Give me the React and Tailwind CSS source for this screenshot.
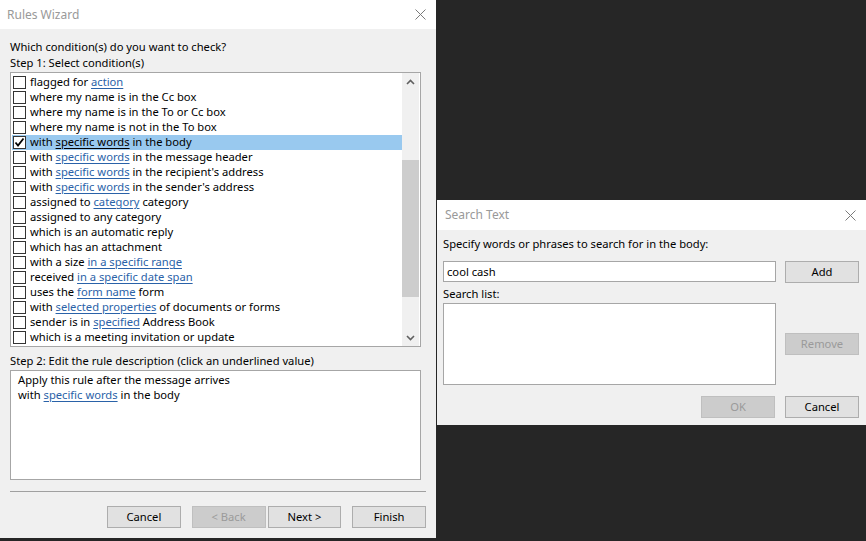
import { Fragment } from 'react'

const conditions = [
  ['flagged for ', ['action']],
  ['where my name is in the Cc box'],
  ['where my name is in the To or Cc box'],
  ['where my name is not in the To box'],
  ['with ', ['specific words'], ' in the body'],
  ['with ', ['specific words'], ' in the message header'],
  ['with ', ['specific words'], ' in the recipient\'s address'],
  ['with ', ['specific words'], ' in the sender\'s address'],
  ['assigned to ', ['category'], ' category'],
  ['assigned to any category'],
  ['which is an automatic reply'],
  ['which has an attachment'],
  ['with a size ', ['in a specific range']],
  ['received ', ['in a specific date span']],
  ['uses the ', ['form name'], ' form'],
  ['with ', ['selected properties'], ' of documents or forms'],
  ['sender is in ', ['specified'], ' Address Book'],
  ['which is a meeting invitation or update'],
]

function Parts({ parts, selected }) {
  return parts.map((p, i) =>
    Array.isArray(p) ? (
      <span key={i} className={selected ? 'underline underline-offset-2' : 'underline underline-offset-2 text-[#2a62a8] decoration-[#2a62a8]'}>
        {p[0]}
      </span>
    ) : (
      <Fragment key={i}>{p}</Fragment>
    )
  )
}

function CloseX({ className }) {
  return (
    <svg width="11" height="11" viewBox="0 0 11 11" className={className}>
      <path d="M0.5 0.5 L10.5 10.5 M10.5 0.5 L0.5 10.5" stroke="#7a7a7a" strokeWidth="1" fill="none" />
    </svg>
  )
}

function Btn({ children, disabled, className = '' }) {
  return (
    <div
      className={`w-[74px] h-[22px] flex items-center justify-center border ${
        disabled ? 'bg-[#cccccc] border-[#bfbfbf] text-[#9a9a9a]' : 'bg-[#e1e1e1] border-[#adadad] text-black'
      } ${className}`}
    >
      {children}
    </div>
  )
}

function Checkbox({ checked }) {
  return (
    <div className="w-[13px] h-[13px] border border-[#333333] bg-white shrink-0 flex items-center justify-center">
      {checked && (
        <svg width="11" height="11" viewBox="0 0 11 11">
          <path d="M1.5 5.5 L4 8.5 L9.5 1.5" stroke="#000" strokeWidth="1.8" fill="none" />
        </svg>
      )}
    </div>
  )
}

export default function App() {
  return (
    <div className="w-[866px] h-[541px] bg-[#262626] flex overflow-hidden text-[11.2px] text-black" style={{ fontFamily: '"Noto Sans", sans-serif' }}>
      {/* Rules Wizard */}
      <div className="w-[436px] h-[538px] bg-[#f0f0f0] flex flex-col shrink-0">
        <div className="h-[29px] bg-white flex items-center justify-between pl-[7px] pr-[10px]">
          <span className="text-[#999999] text-[12px]">Rules Wizard</span>
          <CloseX />
        </div>
        <div className="px-[10px] flex flex-col">
          <div className="pt-[10px] h-[26px] leading-[15px]">Which condition(s) do you want to check?</div>
          <div className="h-[16px] leading-[15px]">Step 1: Select condition(s)</div>
          <div className="mt-[1px] w-[411px] h-[275px] border border-[#a6a6a6] bg-white flex">
            <div className="flex-1 pt-[2px] pl-[1px]">
              {conditions.map((c, i) => {
                const sel = i === 4
                return (
                  <div key={i} className={`h-[15px] flex items-center pl-[1px] whitespace-nowrap ${sel ? 'bg-[#99c9ef]' : ''}`}>
                    <Checkbox checked={sel} />
                    <span className="ml-[4px] leading-[14px] pb-[1px]">
                      <Parts parts={c} selected={sel} />
                    </span>
                  </div>
                )
              })}
            </div>
            <div className="w-[17px] mr-[1px] bg-[#f0f0f0] flex flex-col">
              <div className="h-[17px] flex items-center justify-center">
                <svg width="9" height="6" viewBox="0 0 9 6">
                  <path d="M1 5 L4.5 1.5 L8 5" stroke="#606060" strokeWidth="1.6" fill="none" />
                </svg>
              </div>
              <div className="h-[70px]" />
              <div className="h-[137px] bg-[#cdcdcd]" />
              <div className="flex-1" />
              <div className="h-[17px] flex items-center justify-center">
                <svg width="9" height="6" viewBox="0 0 9 6">
                  <path d="M1 1 L4.5 4.5 L8 1" stroke="#606060" strokeWidth="1.6" fill="none" />
                </svg>
              </div>
            </div>
          </div>
          <div className="mt-[6px] h-[16px] leading-[15px]">Step 2: Edit the rule description (click an underlined value)</div>
          <div className="mt-[1px] w-[411px] h-[110px] border border-[#a6a6a6] bg-white pl-[7px] pt-[1px] leading-[15px]">
            <div>Apply this rule after the message arrives</div>
            <div>
              with{' '}
              <span className="underline underline-offset-2 text-[#2a62a8] decoration-[#2a62a8]">specific words</span> in the body
            </div>
          </div>
          <div className="mt-[11px] h-px w-[416px] bg-[#a0a0a0]" />
          <div className="mt-[14px] w-[416px] flex">
            <Btn className="ml-[97px]">Cancel</Btn>
            <Btn disabled className="ml-[11px]">&lt; Back</Btn>
            <Btn className="ml-[2px]">Next &gt;</Btn>
            <Btn className="ml-[11px]">Finish</Btn>
          </div>
        </div>
      </div>

      {/* Search Text */}
      <div className="ml-[1px] mt-[200px] w-[432px] h-[225px] bg-[#f0f0f0] flex flex-col shrink-0">
        <div className="h-[30px] bg-white flex items-center justify-between pl-[8px] pr-[13px]">
          <span className="text-[#999999] text-[12px]">Search Text</span>
          <CloseX />
        </div>
        <div className="pl-[6px] flex flex-col">
          <div className="pt-[6px] h-[22px] leading-[16px]">Specify words or phrases to search for in the body:</div>
          <div className="mt-[9px] flex">
            <div className="w-[333px] h-[21px] border border-[#a6a6a6] bg-white pl-[3px] leading-[19px]">cool cash</div>
            <Btn className="ml-[9px]">Add</Btn>
          </div>
          <div className="mt-[3px] h-[16px] leading-[16px]">Search list:</div>
          <div className="mt-[1px] flex">
            <div className="w-[333px] h-[82px] border border-[#a6a6a6] bg-white" />
            <div className="ml-[9px] pt-[30px]">
              <Btn disabled>Remove</Btn>
            </div>
          </div>
          <div className="mt-[11px] flex">
            <Btn disabled className="ml-[258px]">OK</Btn>
            <Btn className="ml-[10px]">Cancel</Btn>
          </div>
        </div>
      </div>
    </div>
  )
}
